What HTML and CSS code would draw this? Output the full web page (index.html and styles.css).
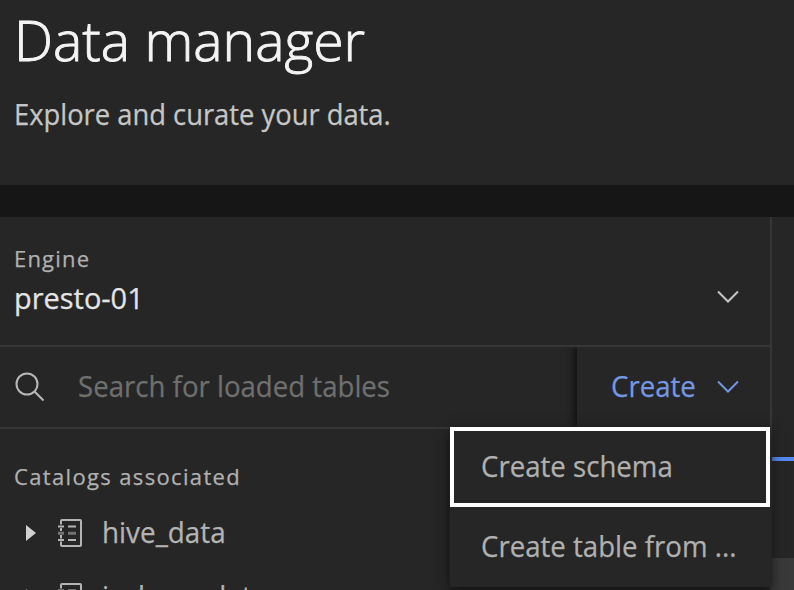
FILE: index.html
```
<!DOCTYPE html>
<html lang="en">
<head>
<meta charset="utf-8">
<title>Data manager</title>
<link rel="stylesheet" href="styles.css">
</head>
<body>
<header class="header">
  <h1 class="title"><span class="t t-title">Data manager</span></h1>
  <p class="subtitle"><span class="t t-sub">Explore and curate your data.</span></p>
</header>
<main class="main">
  <section class="panel">
    <div class="engine">
      <div class="engine-info">
        <div class="label"><span class="t-engine">Engine</span></div>
        <div class="value"><span class="t t-presto">presto-01</span></div>
      </div>
      <svg class="chevron" viewBox="0 0 22 14"><path d="M1 1.5 11 11.5 21 1.5"/></svg>
    </div>
    <div class="toolbar">
      <svg class="search-icon" viewBox="0 0 30 30"><circle cx="12" cy="12" r="10.5"/><path d="M19.3 19.3 28.5 28.5"/></svg>
      <div class="placeholder"><span class="t t-search">Search for loaded tables</span></div>
      <button class="create"><span class="t t-create">Create</span><svg class="chevron" viewBox="0 0 22 14"><path d="M1 1.5 11 11.5 21 1.5"/></svg></button>
      <div class="menu">
        <div class="item focused"><span class="t t-schema">Create schema</span></div>
        <div class="item"><span class="t t-table">Create table from ...</span></div>
      </div>
    </div>
    <div class="catalogs">
      <div class="label"><span class="t-cat">Catalogs associated</span></div>
      <div class="row">
        <svg class="caret" viewBox="0 0 10 16"><path d="M0 0 10 8 0 16Z"/></svg>
        <svg class="catalog-icon" viewBox="0 0 26 30"><path d="M3 6.5V3Q3 2 4 2H22Q23 2 23 3V27Q23 28 22 28H4Q3 28 3 27V23.5M3 10V13M3 17V20.5M0 8.5H6M0 22H6M10 8.5H18M10 22H18"/><path class="dim" d="M0 15.2H6M10 15.2H18"/></svg>
        <span class="t t-hive">hive_data</span>
      </div>
      <div class="row">
        <svg class="caret" viewBox="0 0 10 16"><path d="M0 0 10 8 0 16Z"/></svg>
        <svg class="catalog-icon" viewBox="0 0 26 30"><path d="M3 6.5V3Q3 2 4 2H22Q23 2 23 3V27Q23 28 22 28H4Q3 28 3 27V23.5M3 10V13M3 17V20.5M0 8.5H6M0 22H6M10 8.5H18M10 22H18"/><path class="dim" d="M0 15.2H6M10 15.2H18"/></svg>
        <span class="t t-ice">iceberg_data</span>
      </div>
    </div>
  </section>
  <aside class="side">
    <div class="tab"></div>
    <div class="gap"></div>
    <div class="table-head"></div>
  </aside>
</main>
</body>
</html>
```
FILE: styles.css
```
* { box-sizing: border-box; margin: 0; padding: 0; }
body {
  width: 794px; height: 590px; overflow: hidden;
  display: flex; flex-direction: column;
  background: #262626; color: #c6c6c6;
  font: 400 29px/40px "Open Sans", "Noto Sans", sans-serif;
  -webkit-text-stroke: .25px currentColor;
}
svg { display: block; flex: none; fill: none; stroke: currentColor; stroke-width: 2; }
.t { display: inline-block; white-space: nowrap; transform-origin: 0 50%; transform: scaleX(.952); }
.t-title { transform: scaleX(1.005); }
.t-sub { transform: scaleX(.943); }
.t-presto { transform: scaleX(.998); }
.t-hive, .t-ice { transform: scaleX(.96); }
.t-engine { letter-spacing: 1.2px; }
.t-cat { letter-spacing: 1.35px; }
.header { height: 185px; padding: 2px 14px 0; flex: none; }
.title { font-weight: 300; font-size: 55px; line-height: 76px; height: 76px; color: #f4f4f4; -webkit-text-stroke: .9px #f4f4f4; }
.subtitle { margin-top: 16px; }
.main { display: flex; flex: 1; min-height: 0; overflow: hidden; border-top: 32px solid #161616; }
.panel { width: 772px; flex: none; border-right: 2px solid #363636; }
.engine { height: 130px; padding: 25px 31px 0 14px; display: flex; border-bottom: 2px solid #363636; }
.engine-info { flex: 1; }
.label { font-size: 22px; line-height: 32px; color: #b0b0b0; }
.value { margin-top: 4px; color: #e4e4e4; }
.chevron { width: 22px; height: 14px; margin-top: 48px; }
.toolbar { position: relative; height: 82px; display: flex; align-items: center; padding-left: 15px; border-bottom: 2px solid #363636; }
.search-icon { width: 30px; height: 30px; color: #b8b8b8; }
.placeholder { margin: 0 0 2px 33px; flex: 1; color: #6f6f6f; }
.create {
  width: 193px; height: 80px; border: 0; background: #262626; color: #7597e2;
  font: inherit; display: flex; align-items: center; justify-content: space-between;
  padding: 0 31px 2px 34px; box-shadow: -3px 0 7px #101010; clip-path: inset(0 0 0 -12px);
}
.create .chevron { margin-top: 2px; }
.menu { position: absolute; z-index: 2; left: 450px; top: 80px; width: 320px; background: #262626; color: #b0b0b0; box-shadow: 0 4px 12px #111; }
.item { height: 80px; padding: 0 31px 2px; display: flex; align-items: center; }
.focused { border: 4px solid #fff; padding: 0 27px 2px; }
.catalogs { padding: 31px 0 0 14px; color: #b4b4b4; }
.row { height: 64px; display: flex; align-items: center; }
.label + .row { margin-top: 8px; }
.caret { width: 10px; height: 16px; margin: 2px 0 0 12px; fill: #d0d0d0; stroke: none; }
.catalog-icon { width: 26px; height: 30px; margin: 1px 18px 0 22px; }
.dim { opacity: .55; stroke-width: 3; }
.side { flex: 1; display: flex; flex-direction: column; }
.tab { height: 244px; border-bottom: 4px solid #5688f0; }
.gap { height: 97px; }
.table-head { flex: 1; background: #393939; }
```
